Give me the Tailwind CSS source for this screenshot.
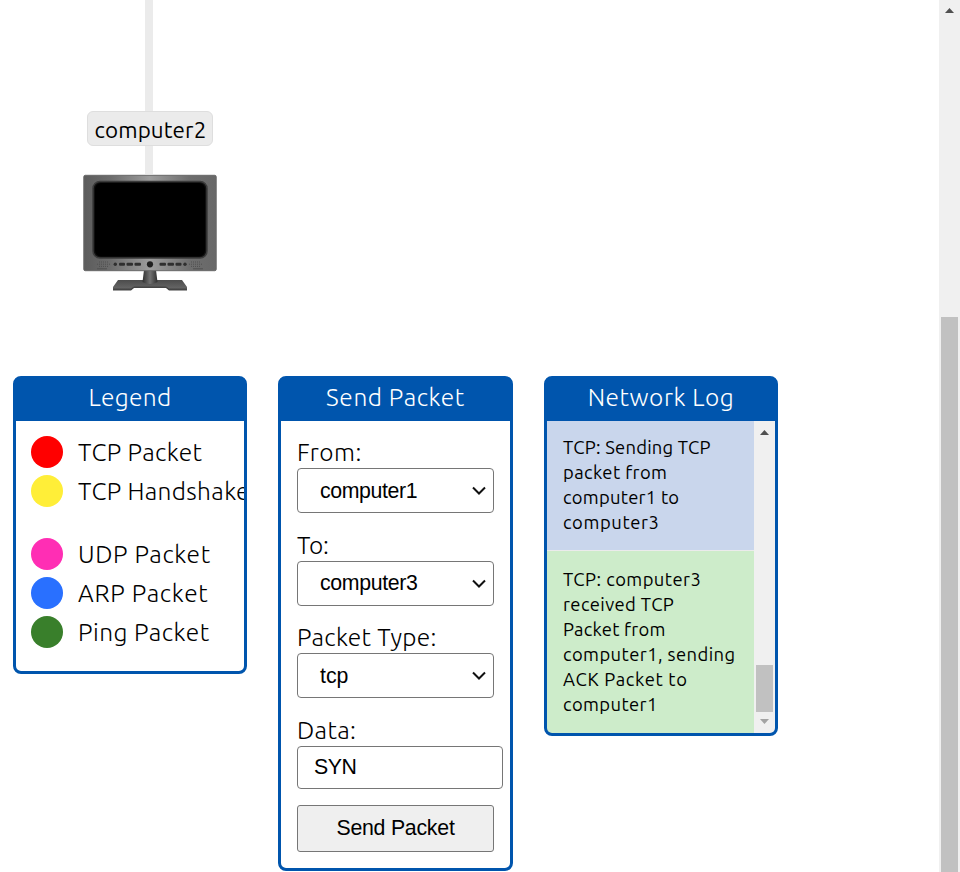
<!DOCTYPE html>
<html lang="en">
<head>
<meta charset="utf-8">
<title>Network simulator</title>
<script src="https://cdn.jsdelivr.net/npm/@tailwindcss/browser@4"></script>
</head>
<body class="h-[872px] overflow-hidden bg-white text-black font-['Ubuntu','Noto_Sans',sans-serif]">
<div class="flex h-[872px] w-[960px]">
  <main class="w-[939px] shrink-0">
    <section class="h-[376px] pl-[83px]">
      <div class="flex w-[134px] flex-col items-center">
        <div class="mr-[2px] h-[111px] w-2 bg-[#ebebeb]"></div>
        <div class="flex h-[35px] w-[126px] items-center justify-center rounded-[6px] border border-[#dedede] bg-[#ebebeb] pt-[3px] pl-px text-[22.400px] leading-none whitespace-nowrap"><span class="tracking-[0.1px]">computer2</span></div>
        <div class="mr-[2px] h-7 w-2 bg-[#ebebeb]"></div>
        <svg class="block" width="134" height="118" viewBox="0 0 134 118">
          <defs>
            <linearGradient id="bezel" x1="0" y1="0" x2="1" y2="0"><stop offset="0" stop-color="#5c5c5c"/><stop offset=".2" stop-color="#6c6c6c"/><stop offset=".5" stop-color="#9d9d9d"/><stop offset=".8" stop-color="#6e6e6e"/><stop offset="1" stop-color="#686868"/></linearGradient>
            <linearGradient id="stem" x1="0" y1="0" x2="1" y2="0"><stop offset="0" stop-color="#303030"/><stop offset=".5" stop-color="#727272"/><stop offset="1" stop-color="#303030"/></linearGradient>
            <linearGradient id="foot" x1="0" y1="0" x2="0" y2="1"><stop offset="0" stop-color="#4c4c4c"/><stop offset="1" stop-color="#6a6a6a"/></linearGradient>
          </defs>
          <path d="M35 106H99L104 113V116H86L83 113.500H51L48 116H30V113Z" fill="url(#foot)"/>
          <path d="M30 114.500H48L51 112.500H83L86 114.500H104V116.500H86L83 114H51L48 116.500H30Z" fill="#454545"/>
          <path d="M61 96H73L74.500 108Q67 112 59.500 108Z" fill="url(#stem)"/>
          <rect x=".8" y="1.300" width="132.400" height="95.400" rx="1.500" fill="url(#bezel)" stroke="#686868"/>
          <rect x="10" y="7.500" width="114" height="76.500" rx="7" fill="#111" stroke="#3c3c3c" stroke-width="1.500"/>
          <rect x="12" y="9" width="110" height="73.500" rx="6" fill="#000"/>
          <circle cx="67" cy="90.300" r="3.100" fill="#202020"/>
          <g fill="#2f2f2f"><circle cx="32.300" cy="90.300" r="1.700"/><rect x="36" y="88.800" width="6" height="3" rx="1"/><rect x="43.500" y="88.800" width="6.500" height="3" rx="1"/><rect x="51.500" y="88.800" width="6.500" height="3" rx="1"/><rect x="76.500" y="88.800" width="6.500" height="3" rx="1"/><rect x="84.500" y="88.800" width="6.500" height="3" rx="1"/><rect x="92.500" y="88.800" width="6" height="3" rx="1"/><circle cx="102" cy="90.300" r="1.700"/></g>
          <g stroke="#505050" stroke-width="1" stroke-dasharray="1 1"><path d="M16 88H26M14 90.200H28M16 92.400H26M108 88H118M106 90.200H120M108 92.400H118"/></g>
          <path d="M14 94.800H24M110 94.800H120" stroke="#505050"/>
        </svg>
      </div>
    </section>

    <section class="flex items-start pl-[13px]">
      <div class="mr-[31px] h-[298px] w-[234px] rounded-[8px] border-[3px] border-[#0055ad] bg-white">
        <h2 class="-mx-px -mt-px flex h-[43px] items-center justify-center rounded-t-[6px] bg-[#0055ad] pb-[5px] text-[24.500px] font-light leading-none text-white"><span class="tracking-[0.3px]">Legend</span></h2>
        <ul class="overflow-hidden pt-[15px] pb-4 pl-[15px] text-[24.500px] font-light leading-8 whitespace-nowrap">
          <li class="mb-[7px] flex gap-[15px]"><i class="size-8 shrink-0 rounded-full bg-[#ff0000]"></i><span class="pt-px leading-[31px] tracking-[0.400px]">TCP Packet</span></li>
          <li class="mb-[31px] flex gap-[15px]"><i class="size-8 shrink-0 rounded-full bg-[#ffee38]"></i><span class="pt-px leading-[31px] tracking-[0.360px]">TCP Handshake</span></li>
          <li class="mb-[7px] flex gap-[15px]"><i class="size-8 shrink-0 rounded-full bg-[#ff2eb4]"></i><span class="pt-px leading-[31px] tracking-[0.650px]">UDP Packet</span></li>
          <li class="mb-[7px] flex gap-[15px]"><i class="size-8 shrink-0 rounded-full bg-[#2970ff]"></i><span class="pt-px leading-[31px] tracking-[0.720px]">ARP Packet</span></li>
          <li class="flex gap-[15px]"><i class="size-8 shrink-0 rounded-full bg-[#397f2b]"></i><span class="pt-px leading-[31px] tracking-[0.500px]">Ping Packet</span></li>
        </ul>
      </div>

      <div class="mr-[31px] h-[495px] w-[235px] rounded-[8px] border-[3px] border-[#0055ad] bg-white">
        <h2 class="-mx-px -mt-px flex h-[43px] items-center justify-center rounded-t-[6px] bg-[#0055ad] pb-[5px] text-[24.500px] font-light leading-none text-white"><span class="tracking-[0.600px]">Send Packet</span></h2>
        <form class="px-4 pt-4 text-[24.500px] font-light">
          <label class="block h-[31px] leading-[31px]"><span class="tracking-[0.500px]">From:</span></label>
          <div class="mb-4 flex h-[45px] w-[197px] items-center justify-between rounded-[4px] border border-[#767676] pr-[6px] pl-[22px] font-['Liberation_Sans',sans-serif] text-[21.300px] font-normal"><span class="pt-[2px] tracking-[-0.380px]">computer1</span><svg width="16" height="16" viewBox="0 0 16 16" fill="none" stroke="#111" stroke-width="2"><path d="M2 4.500L8 10.500L14 4.500"/></svg></div>
          <label class="block h-8 leading-8"><span class="tracking-[-0.200px]">To:</span></label>
          <div class="mb-[15px] flex h-[45px] w-[197px] items-center justify-between rounded-[4px] border border-[#767676] pr-[6px] pl-[22px] font-['Liberation_Sans',sans-serif] text-[21.300px] font-normal"><span class="tracking-[-0.340px]">computer3</span><svg width="16" height="16" viewBox="0 0 16 16" fill="none" stroke="#111" stroke-width="2"><path d="M2 4.500L8 10.500L14 4.500"/></svg></div>
          <label class="block h-8 leading-8"><span class="tracking-[0.300px]">Packet Type:</span></label>
          <div class="mb-4 flex h-[45px] w-[197px] items-center justify-between rounded-[4px] border border-[#767676] pr-[6px] pl-[22px] font-['Liberation_Sans',sans-serif] text-[21.300px] font-normal"><span class="pt-[2px]">tcp</span><svg width="16" height="16" viewBox="0 0 16 16" fill="none" stroke="#111" stroke-width="2"><path d="M2 4.500L8 10.500L14 4.500"/></svg></div>
          <label class="block h-8 leading-8"><span class="tracking-[0.400px]">Data:</span></label>
          <div class="mb-4 flex h-[43px] w-[206px] items-center rounded-[4px] border border-[#767676] pl-4 font-['Liberation_Sans',sans-serif] text-[21.300px] font-normal"><span class="tracking-[-0.400px]">SYN</span></div>
          <button type="button" class="flex h-[47px] w-[197px] items-center justify-center rounded-[3px] border border-[#767676] bg-[#efefef] font-['Liberation_Sans',sans-serif] text-[21.300px] font-normal"><span class="tracking-[-0.240px]">Send Packet</span></button>
        </form>
      </div>

      <div class="flex h-[360px] w-[234px] flex-col rounded-[8px] border-[3px] border-[#0055ad] bg-[#0055ad]">
        <h2 class="flex h-[42px] shrink-0 items-center justify-center pb-[6px] text-[24.500px] font-light leading-none text-white"><span class="tracking-[0.560px]">Network Log</span></h2>
        <div class="flex h-[312px] overflow-hidden rounded-b-[5px]">
          <div class="w-[207px] text-[18.400px] leading-[25px] tracking-[0.240px] whitespace-nowrap">
            <div class="h-[130px] border-b border-[#ebebeb] bg-[#c9d6ec] pt-[14px] pl-4"><p>TCP: Sending TCP</p><p class="tracking-[0.400px]">packet from</p><p class="tracking-[0.260px]">computer1 to</p><p class="tracking-[0.600px]">computer3</p></div>
            <div class="h-[182px] bg-[#cdecca] pt-4 pl-4"><p class="tracking-[0.450px]">TCP: computer3</p><p class="tracking-[0.400px]">received TCP</p><p>Packet from</p><p class="tracking-[0.430px]">computer1, sending</p><p class="tracking-[0.680px]">ACK Packet to</p><p class="tracking-[0.400px]">computer1</p></div>
          </div>
          <div class="flex w-[21px] flex-col items-center bg-[#f0f0f0]">
            <svg class="mt-[9px] block" width="9" height="5" viewBox="0 0 9 5"><path d="M0 5L4.500 0L9 5Z" fill="#505050"/></svg>
            <div class="mt-[230px] h-[47px] w-[17px] bg-[#c1c1c1]"></div>
            <svg class="mt-[7px] block" width="9" height="5" viewBox="0 0 9 5"><path d="M0 0L4.500 5L9 0Z" fill="#a3a3a3"/></svg>
          </div>
        </div>
      </div>
    </section>
  </main>
  <aside class="flex w-[21px] flex-col items-center bg-[#f0f0f0]">
    <svg class="mt-2 block" width="9" height="5" viewBox="0 0 9 5"><path d="M0 5L4.500 0L9 5Z" fill="#505050"/></svg>
    <div class="mt-[304px] h-[555px] w-[17px] bg-[#c1c1c1]"></div>
  </aside>
</div>
</body>
</html>
